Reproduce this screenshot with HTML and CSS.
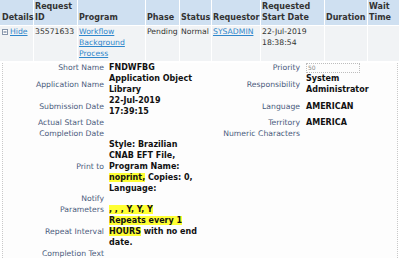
FILE: index.html
```html
<!DOCTYPE html>
<html lang="en">
<head>
    <meta charset="UTF-8">
    <title>Requests</title>
    <link rel="stylesheet" href="styles.css">
</head>
<body>
<table class="requests">
    <colgroup>
        <col class="w-details">
        <col class="w-id">
        <col class="w-program">
        <col class="w-phase">
        <col class="w-status">
        <col class="w-requestor">
        <col class="w-start">
        <col class="w-duration">
        <col class="w-wait">
    </colgroup>
    <thead>
    <tr>
        <th class="first">Details</th>
        <th>Request<br>ID</th>
        <th>Program</th>
        <th>Phase</th>
        <th>Status</th>
        <th>Requestor</th>
        <th>Requested<br>Start Date</th>
        <th>Duration</th>
        <th>Wait<br>Time</th>
    </tr>
    </thead>
    <tbody>
    <tr class="request-row">
        <td class="first"><a class="toggle" href="#"><svg class="toggle-icon" width="6" height="6" viewBox="0 0 6 6"><rect x="0.5" y="0.5" width="5" height="5" fill="#fff" stroke="#8796ab"/><path d="M1.5 3h3" stroke="#4f6383"/></svg>Hide</a></td>
        <td>35571633</td>
        <td><a href="#">Workflow Background Process</a></td>
        <td>Pending</td>
        <td>Normal</td>
        <td><a href="#">SYSADMIN</a></td>
        <td>22-Jul-2019 18:38:54</td>
        <td></td>
        <td></td>
    </tr>
    <tr class="details-row">
        <td colspan="9">
            <div class="detail-box">
                <table class="detail-grid">
                    <colgroup>
                        <col class="w-label">
                        <col class="w-value">
                        <col class="w-label2">
                        <col class="w-value2">
                    </colgroup>
                    <tr>
                        <td class="label">Short Name</td>
                        <td class="value">FNDWFBG</td>
                        <td class="label">Priority</td>
                        <td class="value right"><span class="priority-box">50</span></td>
                    </tr>
                    <tr>
                        <td class="label">Application Name</td>
                        <td class="value">Application Object Library</td>
                        <td class="label">Responsibility</td>
                        <td class="value right">System Administrator</td>
                    </tr>
                    <tr>
                        <td class="label">Submission Date</td>
                        <td class="value">22-Jul-2019 17:39:15</td>
                        <td class="label">Language</td>
                        <td class="value right">AMERICAN</td>
                    </tr>
                    <tr>
                        <td class="label">Actual Start Date</td>
                        <td class="value"></td>
                        <td class="label">Territory</td>
                        <td class="value right">AMERICA</td>
                    </tr>
                    <tr>
                        <td class="label">Completion Date</td>
                        <td class="value"></td>
                        <td class="label">Numeric Characters</td>
                        <td class="value right"></td>
                    </tr>
                    <tr>
                        <td class="label">Print to</td>
                        <td class="value">Style: Brazilian CNAB EFT File, Program Name: <span class="hl">noprint,</span> Copies: 0, Language:</td>
                        <td></td>
                        <td></td>
                    </tr>
                    <tr>
                        <td class="label">Notify</td>
                        <td class="value"></td>
                        <td></td>
                        <td></td>
                    </tr>
                    <tr>
                        <td class="label">Parameters</td>
                        <td class="value"><span class="hl">, , , Y, Y, Y</span></td>
                        <td></td>
                        <td></td>
                    </tr>
                    <tr>
                        <td class="label">Repeat Interval</td>
                        <td class="value"><span class="hl">Repeats every 1 HOURS</span> with no end date.</td>
                        <td></td>
                        <td></td>
                    </tr>
                    <tr>
                        <td class="label">Completion Text</td>
                        <td class="value"></td>
                        <td></td>
                        <td></td>
                    </tr>
                </table>
            </div>
        </td>
    </tr>
    </tbody>
</table>
</body>
</html>
```

FILE: styles.css
```css
body {
    margin: 0;
    background: #fff;
    font-family: "DejaVu Sans", Verdana, sans-serif;
    font-size: 7.7px;
    line-height: 10.9px;
    color: #333;
}
a {
    color: #2f86cb;
}
.requests {
    width: 400px;
    table-layout: fixed;
    border-collapse: separate;
    border-spacing: 0;
}
.w-details { width: 34px; }
.w-id { width: 44px; }
.w-program { width: 68px; }
.w-phase { width: 34px; }
.w-status { width: 32px; }
.w-requestor { width: 49px; }
.w-start { width: 64px; }
.w-duration { width: 43px; }
.w-wait { width: 32px; }
.requests th {
    background: #cfe0f1;
    color: #333;
    font-size: 8px;
    font-weight: bold;
    text-align: left;
    vertical-align: bottom;
    padding: 2px 0 1px 1px;
    border-right: 1px solid #fff;
}
.requests th.first,
.request-row td.first {
    padding-left: 2px;
}
.request-row td {
    background: #f1f3f5;
    vertical-align: top;
    padding: 1.5px 0 0.5px 1px;
    border-right: 1px solid #fff;
    border-top: 1px solid #fff;
}
.toggle-icon {
    margin-right: 2px;
    vertical-align: -0.5px;
}
.details-row td {
    padding: 2px 2px 0;
}
.detail-box {
    border-left: 1px dotted #c9c9c9;
    border-right: 1px dotted #c9c9c9;
    background: #fdfdfd;
    padding-bottom: 20px;
}
.detail-grid {
    width: 394px;
    table-layout: fixed;
    border-collapse: collapse;
}
.w-label { width: 103px; }
.w-value { width: 96px; }
.w-label2 { width: 100px; }
.w-value2 { width: 95px; }
.detail-grid td {
    padding: 0;
    vertical-align: middle;
}
.detail-grid td.label {
    text-align: right;
    padding-right: 2px;
    color: #4a5b7c;
}
.detail-grid td.value {
    padding-left: 3px;
    padding-right: 2px;
    font-size: 8px;
    font-weight: bold;
    color: #111;
}
.detail-grid td.value.right {
    padding-left: 4px;
}
.hl {
    background: #ffff33;
}
.priority-box {
    display: inline-block;
    box-sizing: border-box;
    width: 54px;
    height: 10px;
    border: 1px dotted #bdbdbd;
    padding-left: 1px;
    font-size: 6px;
    line-height: 8px;
    font-weight: normal;
    color: #888;
    vertical-align: 1px;
}
```
